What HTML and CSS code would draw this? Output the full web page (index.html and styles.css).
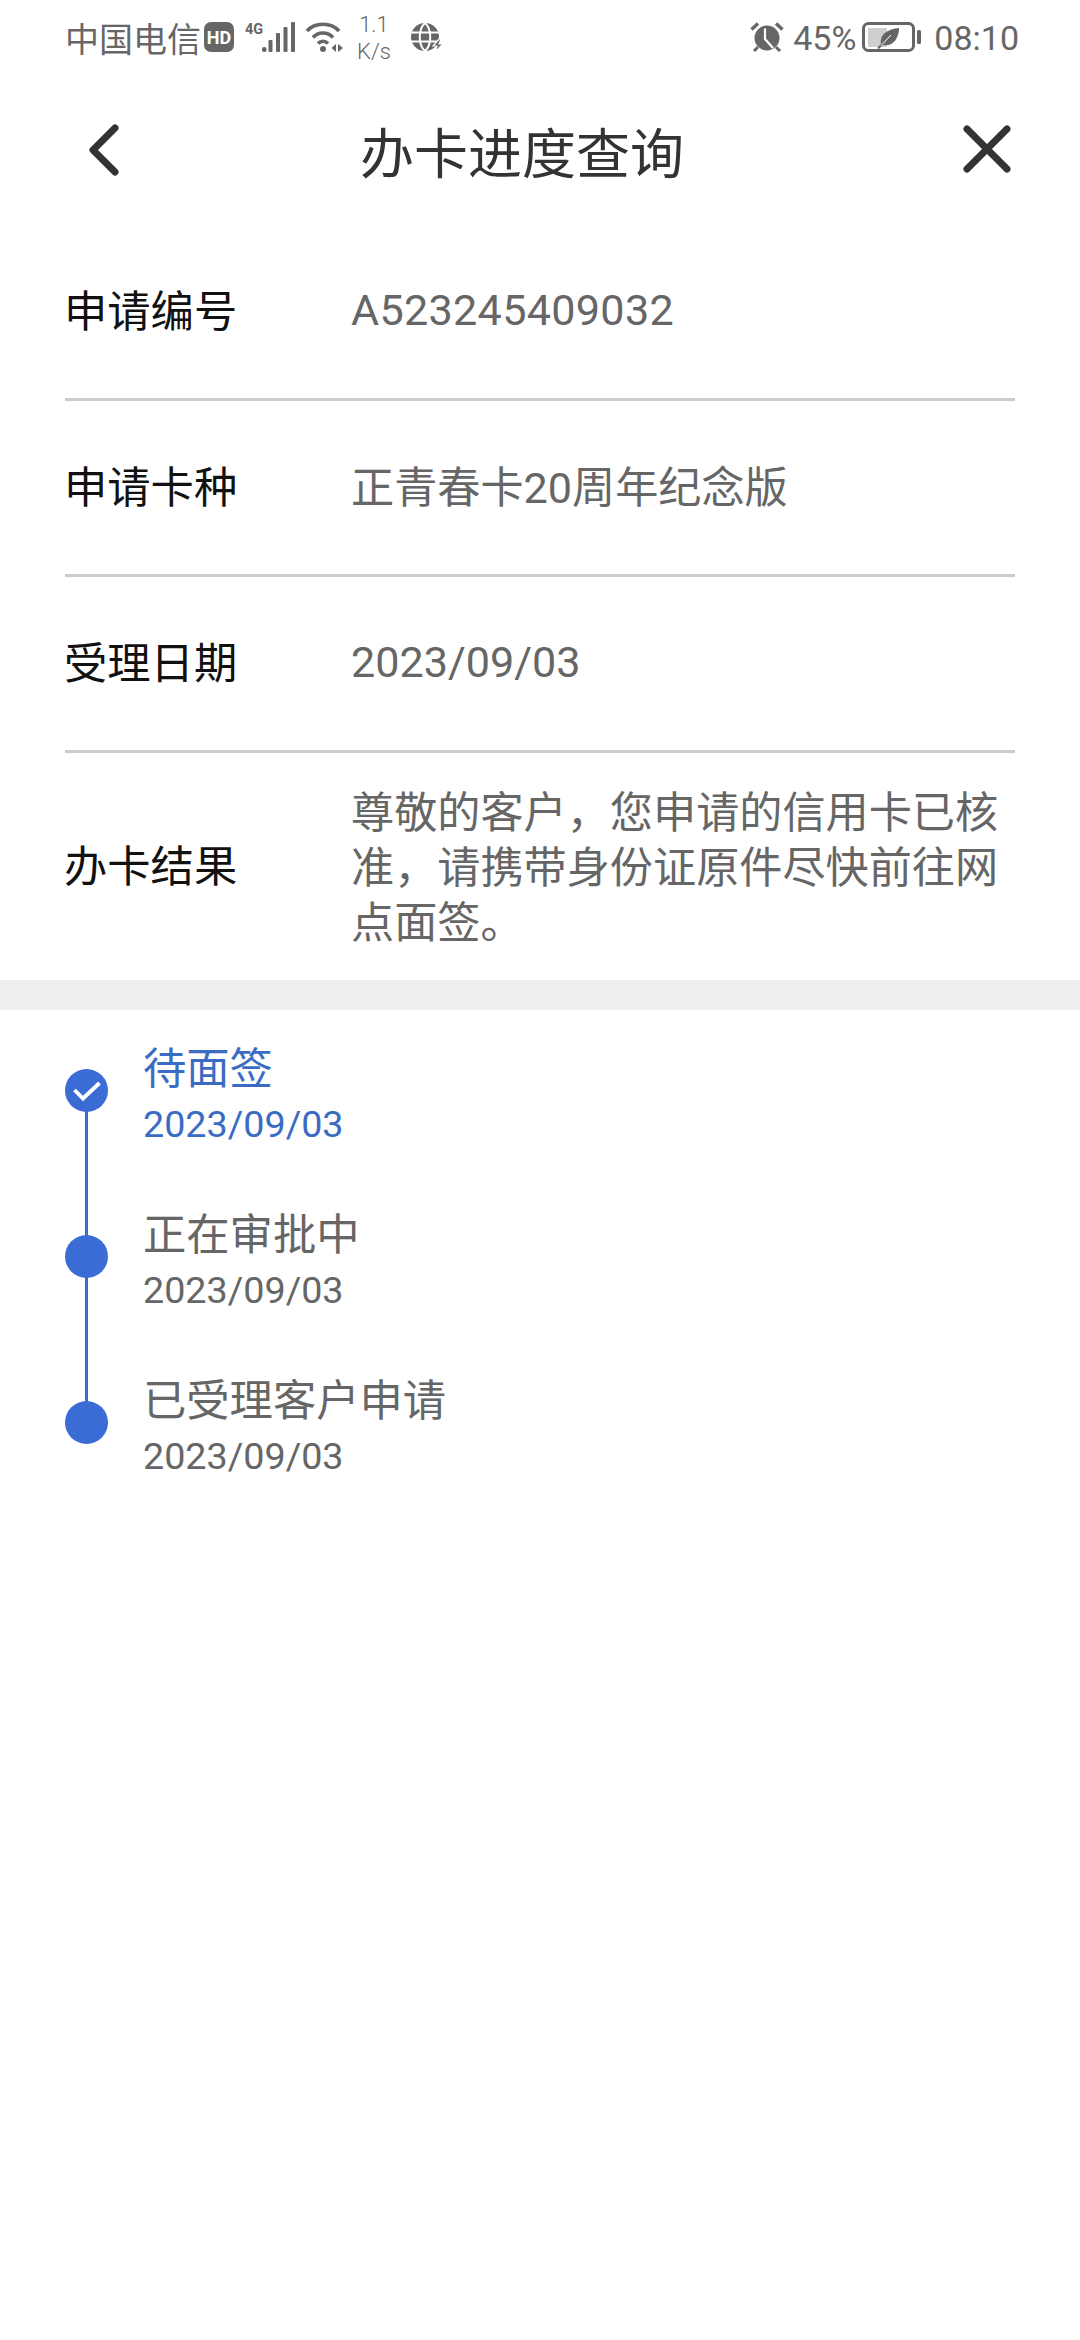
FILE: index.html
```html
<!DOCTYPE html>
<html lang="zh-CN">
<head>
<meta charset="utf-8">
<title>办卡进度查询</title>
<link rel="stylesheet" href="styles.css">
</head>
<body>
<div class="status">
  <div class="status-left">
    <span class="carrier">中国电信</span>
    <svg class="ic-hd" width="30" height="30" viewBox="0 0 30 30"><rect width="30" height="30" rx="7" fill="#666"/><text x="15" y="21.500" text-anchor="middle" class="hd-text">HD</text></svg>
    <svg class="ic-signal" width="50" height="30" viewBox="0 0 50 30"><text x="0" y="12" class="g-text">4G</text><rect x="17" y="25" width="4.500" height="5" rx="2" fill="#666"/><rect x="23.500" y="18" width="4" height="12" rx="1" fill="#666"/><rect x="31" y="11" width="4" height="19" rx="1" fill="#666"/><rect x="38.500" y="5" width="4" height="25" rx="1" fill="#666"/><rect x="46" y="0" width="4" height="30" rx="1" fill="#666"/></svg>
    <svg class="ic-wifi" width="38" height="30" viewBox="0 0 38 30"><path d="M2 9C10 0 26 0 34 9M8 15.500C13 9.500 23 9.500 28 15.500M13 21.500C16 18.500 20 18.500 23 21.500" fill="none" stroke="#666" stroke-width="3.600"/><circle cx="18" cy="27" r="3" fill="#666"/><path d="M31 22v8l-4.500-4zM33 22l5 4-5 4z" fill="#666"/></svg>
    <div class="speed"><span>1.1</span><span>K/s</span></div>
    <svg class="ic-globe" width="32" height="30" viewBox="0 0 32 30"><circle cx="14" cy="15" r="14" fill="#666"/><path d="M0 10.500H28M0 19.500H28M14 1C7 7 7 23 14 29M14 1C21 7 21 23 14 29" fill="none" stroke="#fff" stroke-width="2"/><path d="M28 17l-6 7h4l-2 6 8-8h-4l2-5z" fill="#666" stroke="#fff" stroke-width="1.200"/></svg>
  </div>
  <div class="status-right">
    <svg class="ic-alarm" width="34" height="30" viewBox="0 0 34 30"><path d="M1.500 7.500L8 1.500M32.500 7.500L26 1.500" stroke="#666" stroke-width="3.400" fill="none"/><path d="M4 29l4-4M30 29l-4-4" stroke="#666" stroke-width="3" fill="none"/><circle cx="17" cy="16" r="12.500" fill="#666"/><path d="M15 6.500V17L23 26" stroke="#fff" stroke-width="2.200" fill="none"/></svg>
    <span class="pct">45%</span>
    <svg class="ic-batt" width="60" height="30" viewBox="0 0 60 30"><rect x="1.500" y="1.500" width="50" height="27" rx="5" fill="none" stroke="#666" stroke-width="3"/><rect x="6" y="6" width="19" height="19" fill="#cfcfcf"/><path d="M19 22.500C17 12 26 7 37 6C37 17 30 26 19 22.500Z" fill="#666"/><path d="M16 26.500L27 15" stroke="#666" stroke-width="2" fill="none"/><path d="M19 23.500L29 13" stroke="#fff" stroke-width="1" fill="none"/><rect x="55" y="8" width="4" height="14" rx="1.500" fill="#666"/></svg>
    <span class="clock">08:10</span>
  </div>
</div>

<header class="nav">
  <svg class="nav-back" width="40" height="60" viewBox="0 0 40 60"><path d="M30 7L8 29L30 51" fill="none" stroke="#333" stroke-width="7" stroke-linecap="round" stroke-linejoin="round"/></svg>
  <h1 class="nav-title">办卡进度查询</h1>
  <svg class="nav-close" width="54" height="54" viewBox="0 0 54 54"><path d="M7 6L47 46M47 6L7 46" fill="none" stroke="#333" stroke-width="7" stroke-linecap="round"/></svg>
</header>

<section class="info">
  <div class="row"><div class="label">申请编号</div><div class="value value-id">A523245409032</div></div>
  <div class="row"><div class="label">申请卡种</div><div class="value value-cjk">正青春卡20周年纪念版</div></div>
  <div class="row"><div class="label">受理日期</div><div class="value">2023/09/03</div></div>
  <div class="row row-last"><div class="label">办卡结果</div><div class="value value-multi">尊敬的客户，您申请的信用卡已核准，请携带身份证原件尽快前往网点面签。</div></div>
</section>
<div class="band"></div>

<section class="timeline">
  <div class="step step-active">
    <div class="rail"><div class="dot"><svg width="30" height="22" viewBox="0 0 30 22"><path d="M2.500 10L11 18.500L27.500 3" fill="none" stroke="#fff" stroke-width="3.800"/></svg></div></div>
    <div class="step-body"><div class="step-title">待面签</div><div class="step-date">2023/09/03</div></div>
  </div>
  <div class="step">
    <div class="rail"><div class="dot"></div></div>
    <div class="step-body"><div class="step-title">正在审批中</div><div class="step-date">2023/09/03</div></div>
  </div>
  <div class="step step-end">
    <div class="rail"><div class="dot"></div></div>
    <div class="step-body"><div class="step-title">已受理客户申请</div><div class="step-date">2023/09/03</div></div>
  </div>
</section>
</body>
</html>
```
FILE: styles.css
```css
* { box-sizing: border-box; }
html, body { margin: 0; padding: 0; background: #fff; }
body {
  width: 1080px;
  height: 2340px;
  overflow: hidden;
  font-family: "Noto Sans CJK SC", "Noto Sans", Roboto, sans-serif;
}
.status {
  height: 76px;
  padding: 0 61px 2px 65px;
  display: flex;
  justify-content: space-between;
  align-items: center;
  color: #666;
}
.status-left, .status-right { display: flex; align-items: center; }
.carrier { font-size: 34px; line-height: 40px; margin-top: 2px; }
.ic-hd { margin-left: 3px; }
.ic-signal { margin-left: 11px; }
.ic-wifi { margin-left: 10px; }
.hd-text { font: 700 18px Roboto, sans-serif; fill: #fff; }
.g-text { font: 700 14.500px Roboto, sans-serif; fill: #666; }
.speed {
  width: 36px;
  margin: 2px 0 0 13px;
  display: flex;
  flex-direction: column;
  align-items: center;
  font: 300 22px/27px Roboto, sans-serif;
}
.ic-globe { margin-left: 19px; }
.ic-alarm { margin-right: 9px; }
.pct, .clock { font: 34px/40px Roboto, sans-serif; margin-top: 2px; }
.ic-batt { margin: 0 12px 0 6px; }
.nav {
  height: 150px;
  display: flex;
  align-items: center;
  padding: 0 66px 0 85px;
}
.nav-close { margin-top: -2px; }
.nav-title {
  margin: 0 auto 0 235px;
  font-size: 54px;
  font-weight: 400;
  line-height: 70px;
  color: #333;
}
.info { padding: 0 65px; margin-top: -1px; }
.row {
  height: 176px;
  display: flex;
  align-items: center;
  border-bottom: 3px solid #ccc;
}
.row-last { height: 227px; border-bottom: 0; }
.label {
  width: 287px;
  flex: none;
  margin-left: -1px;
  padding-bottom: 8px;
  font-size: 43.300px;
  color: #111;
}
.value {
  padding-bottom: 3px;
  font-size: 43.150px;
  color: #666;
  font-family: Roboto, "Noto Sans CJK SC", sans-serif;
}
.value-id { letter-spacing: 0.300px; }
.value-cjk { padding-bottom: 8px; }
.value-multi {
  font-family: "Noto Sans CJK SC", sans-serif;
  line-height: 55px;
  width: 660px;
  padding-bottom: 5px;
}
.band { height: 30px; background: #eee; }
.timeline { padding: 20px 65px 0; }
.step { display: flex; height: 166px; }
.rail {
  width: 78px;
  flex: none;
  position: relative;
}
.rail::after {
  content: "";
  position: absolute;
  left: 20px;
  top: 60px;
  width: 3px;
  height: 166px;
  background: #3b6cc4;
}
.step-end .rail::after { display: none; }
.dot {
  position: absolute;
  left: 0;
  top: 39px;
  width: 43px;
  height: 43px;
  border-radius: 50%;
  background: #3b6cd6;
  display: flex;
  align-items: center;
  justify-content: center;
  z-index: 1;
}
.step-body { padding-top: 6px; }
.step-title { font-size: 43.300px; line-height: 58px; color: #666; }
.step-date { margin-top: 4px; font: 37.700px/52px Roboto, sans-serif; color: #666; }
.step-active .step-title, .step-active .step-date { color: #3b6cc4; }
```
